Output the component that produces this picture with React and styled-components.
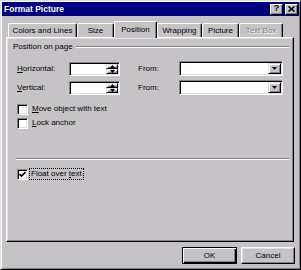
import React from 'react';
import styled, { createGlobalStyle } from 'styled-components';

const Global = createGlobalStyle`
  html, body { margin: 0; padding: 0; background: #c6c3c6; }
  body { font-family: "Liberation Sans", Arial, sans-serif; font-size: 8px; color: #000; }
  * { box-sizing: border-box; }
`;

const Window = styled.div`
  width: 301px;
  height: 270px;
  background: #c6c3c6;
  border: 1px solid;
  border-color: #dedfde #000 #000 #dedfde;
  box-shadow: inset 1px 1px #fff, inset -1px -1px #848284;
  padding: 1px;
  display: flex;
  flex-direction: column;
`;

const TitleBar = styled.div`
  height: 14px;
  background: #000080;
  display: flex;
  align-items: center;
  justify-content: space-between;
  padding: 0 1px 0 2px;
`;

const TitleText = styled.span`
  color: #fff;
  font-weight: bold;
  font-size: 8.5px;
  line-height: 14px;
`;

const TitleButtons = styled.div`
  display: flex;
  gap: 2px;
`;

const TitleButton = styled.div`
  width: 13px;
  height: 11px;
  background: #c6c3c6;
  border: 1px solid;
  border-color: #fff #000 #000 #fff;
  box-shadow: inset -1px -1px #848284;
  display: flex;
  align-items: center;
  justify-content: center;
  font-weight: bold;
  font-size: 9px;
  line-height: 9px;
  padding-bottom: 1px;
`;

const Body = styled.div`
  flex: 1;
  display: flex;
  flex-direction: column;
  padding: 5px 5px 0 4px;
`;

const TabStrip = styled.div`
  height: 16px;
  display: flex;
  align-items: flex-end;
  padding-left: 2px;
`;

const Tab = styled.div`
  width: ${p => p.$w}px;
  height: ${p => (p.$active ? 17 : 14)}px;
  margin-bottom: ${p => (p.$active ? -1 : 0)}px;
  position: relative;
  z-index: ${p => (p.$active ? 1 : 0)};
  background: #c6c3c6;
  border-top: 1px solid #fff;
  border-left: 1px solid #fff;
  border-right: 1px solid #000;
  border-radius: 2px 2px 0 0;
  box-shadow: inset -1px 0 #848284;
  display: flex;
  align-items: center;
  justify-content: center;
  padding-bottom: ${p => (p.$active ? 2 : 0)}px;
  color: ${p => (p.$disabled ? '#848284' : '#000')};
  text-shadow: ${p => (p.$disabled ? '1px 1px #fff' : 'none')};
  white-space: nowrap;
`;

const Panel = styled.div`
  width: 288px;
  height: 205px;
  background: #c6c3c6;
  border: 1px solid;
  border-color: #fff #000 #000 #fff;
  box-shadow: inset -1px -1px #848284, inset 1px 1px #dedfde;
  padding: 4px 4px 0 6px;
  display: flex;
  flex-direction: column;
`;

const SectionHeader = styled.div`
  height: 10px;
  display: flex;
  align-items: center;
  gap: 3px;
  line-height: 10px;
`;

const EtchedLine = styled.div`
  flex: 1;
  height: 2px;
  border-top: 1px solid #848284;
  border-bottom: 1px solid #fff;
`;

const FormGrid = styled.div`
  margin: 9px 0 0 4px;
  display: grid;
  grid-template-columns: 52px 51px 59px 104px;
  grid-auto-rows: 15px;
  row-gap: 4px;
  align-items: center;
`;

const Label = styled.span`
  padding-left: ${p => p.$indent || 0}px;
  white-space: nowrap;
`;

const Sunken = styled.div`
  height: ${p => p.$h}px;
  background: #fff;
  border: 1px solid;
  border-color: #848284 #fff #fff #848284;
  box-shadow: inset 1px 1px #000, inset -1px -1px #dedfde;
  padding: 1px;
  display: flex;
  justify-content: flex-end;
`;

const SpinButtons = styled.div`
  width: 12px;
  display: flex;
  flex-direction: column;
`;

const Raised = styled.div`
  flex: ${p => (p.$w ? 'none' : 1)};
  width: ${p => (p.$w ? `${p.$w}px` : 'auto')};
  background: #c6c3c6;
  border: 1px solid;
  border-color: #dedfde #000 #000 #dedfde;
  box-shadow: inset 1px 1px #fff, inset -1px -1px #848284;
  display: flex;
  align-items: center;
  justify-content: center;
`;

const CheckList = styled.div`
  margin: ${p => p.$top}px 0 0 4px;
  display: flex;
  flex-direction: column;
`;

const CheckRow = styled.div`
  height: 14px;
  display: flex;
  align-items: center;
`;

const Box = styled.div`
  width: 11px;
  height: 11px;
  background: #fff;
  border: 1px solid;
  border-color: #848284 #fff #fff #848284;
  box-shadow: inset 1px 1px #000, inset -1px -1px #dedfde;
  display: flex;
  align-items: center;
  justify-content: center;
`;

const CheckText = styled.span`
  margin-left: ${p => (p.$focus ? 1 : 2)}px;
  padding: 0 1px;
  line-height: 10px;
  border: 1px ${p => (p.$focus ? 'dotted #000' : 'solid transparent')};
  white-space: nowrap;
`;

const Separator = styled.div`
  margin: 28px 0 0 3px;
  height: 2px;
  border-top: 1px solid #848284;
  border-bottom: 1px solid #fff;
`;

const ButtonRow = styled.div`
  margin: 5px -1px 0 0;
  display: flex;
  justify-content: flex-end;
  gap: 4px;
`;

const DialogButton = styled.div`
  width: ${p => p.$w}px;
  height: 17px;
  background: #c6c3c6;
  border: 1px solid;
  border-color: ${p => (p.$default ? '#000' : '#fff #000 #000 #fff')};
  box-shadow: ${p =>
    p.$default
      ? 'inset 1px 1px #fff, inset -1px -1px #000, inset -2px -2px #848284'
      : 'inset -1px -1px #848284, inset 1px 1px #dedfde'};
  display: flex;
  align-items: center;
  justify-content: center;
`;

const U = styled.span`
  text-decoration: underline;
`;

const Arrow = ({ up }) => (
  <svg width="5" height="3" viewBox="0 0 5 3" style={{ display: 'block' }}>
    <path d={up ? 'M2.5 0 L5 3 L0 3 Z' : 'M0 0 L5 0 L2.5 3 Z'} fill="#000" />
  </svg>
);

const Spin = () => (
  <Sunken $h={14}>
    <SpinButtons>
      <Raised><Arrow up /></Raised>
      <Raised><Arrow /></Raised>
    </SpinButtons>
  </Sunken>
);

const Combo = () => (
  <Sunken $h={15}>
    <Raised $w={13}><Arrow /></Raised>
  </Sunken>
);

const Check = () => (
  <svg width="7" height="7" viewBox="0 0 7 7" style={{ display: 'block' }}>
    <path d="M0.5 3 L2.5 5 L6.5 1" stroke="#000" strokeWidth="1.6" fill="none" />
  </svg>
);

const tabs = [
  { label: 'Colors and Lines', w: 69 },
  { label: 'Size', w: 37 },
  { label: 'Position', w: 43, active: true },
  { label: 'Wrapping', w: 45 },
  { label: 'Picture', w: 37 },
  { label: 'Text Box', w: 44, disabled: true },
];

export default function App() {
  return (
    <>
      <Global />
      <Window>
        <TitleBar>
          <TitleText>Format Picture</TitleText>
          <TitleButtons>
            <TitleButton>?</TitleButton>
            <TitleButton>
              <svg width="7" height="6" viewBox="0 0 7 6" style={{ display: 'block' }}>
                <path d="M0.5 0.5 L6.5 5.5 M6.5 0.5 L0.5 5.5" stroke="#000" strokeWidth="1.6" />
              </svg>
            </TitleButton>
          </TitleButtons>
        </TitleBar>
        <Body>
          <TabStrip>
            {tabs.map(t => (
              <Tab key={t.label} $w={t.w} $active={t.active} $disabled={t.disabled}>
                {t.label}
              </Tab>
            ))}
          </TabStrip>
          <Panel>
            <SectionHeader>
              <span>Position on page</span>
              <EtchedLine />
            </SectionHeader>
            <FormGrid>
              <Label><U>H</U>orizontal:</Label>
              <Spin />
              <Label $indent={18}>From:</Label>
              <Combo />
              <Label><U>V</U>ertical:</Label>
              <Spin />
              <Label $indent={18}>From:</Label>
              <Combo />
            </FormGrid>
            <CheckList $top={7}>
              <CheckRow>
                <Box />
                <CheckText><U>M</U>ove object with text</CheckText>
              </CheckRow>
              <CheckRow>
                <Box />
                <CheckText><U>L</U>ock anchor</CheckText>
              </CheckRow>
            </CheckList>
            <Separator />
            <CheckList $top={7}>
              <CheckRow>
                <Box><Check /></Box>
                <CheckText $focus>Float over <U>t</U>ext</CheckText>
              </CheckRow>
            </CheckList>
          </Panel>
          <ButtonRow>
            <DialogButton $w={55} $default>OK</DialogButton>
            <DialogButton $w={54}>Cancel</DialogButton>
          </ButtonRow>
        </Body>
      </Window>
    </>
  );
}
